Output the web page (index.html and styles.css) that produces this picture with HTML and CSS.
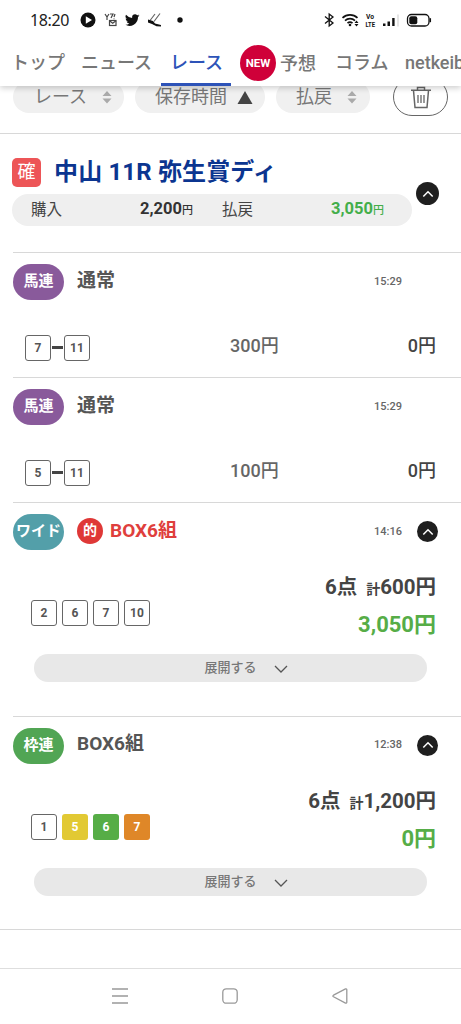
FILE: index.html
```html
<!DOCTYPE html>
<html lang="ja">
<head>
<meta charset="utf-8">
<meta name="viewport" content="width=device-width, initial-scale=1">
<title>レース</title>
<link rel="stylesheet" href="styles.css">
</head>
<body>
<div class="phone">
  <header class="top">
    <div class="status">
      <span class="clock">18:20</span>
      <svg class="notif" width="110" height="18" viewBox="0 0 110 18">
        <circle cx="8" cy="9" r="7.5" fill="#111"/><path d="M5.8 5.2v7.6L12 9z" fill="#fff"/>
        <g fill="none" stroke="#444" stroke-width="1.200"><path d="M25 3l2 3 2-3M27 6v3M30 3h3l-2 4M35 3l-1 3M34 7.500v.8"/><rect x="29.500" y="9.500" width="6.500" height="5"/><path d="M29.500 9.700l3.200 2.600 3.300-2.600"/></g>
        <path d="M59.5 4.600a6 6 0 0 1-1.700.5 3 3 0 0 0 1.300-1.600 6 6 0 0 1-1.900.7 3 3 0 0 0-5.100 2.700 8.500 8.500 0 0 1-6.100-3.100 3 3 0 0 0 .9 4 3 3 0 0 1-1.300-.4 3 3 0 0 0 2.400 2.900 3 3 0 0 1-1.400.1 3 3 0 0 0 2.800 2 6 6 0 0 1-4.400 1.200 8.500 8.500 0 0 0 13-7.500 6 6 0 0 0 1.500-1.500z" fill="#111"/>
        <path d="M75 3L70 9.500M80 2.500L74 10.500" stroke="#666" stroke-width="1.200"/><path d="M68 8.500l5 1.500 2 2.500 6 1.500v1.600l-4.500-.4-4.500-2.200-4-1.500z" fill="#111"/>
        <circle cx="100" cy="9" r="2.700" fill="#111"/>
      </svg>
      <svg class="signals" width="112" height="18" viewBox="0 0 112 18">
        <path d="M3 5.500l8 6.500-3.800 3V3L11 6l-8 6.500" fill="none" stroke="#111" stroke-width="1.300"/>
        <g fill="none" stroke="#111" stroke-width="1.700"><path d="M20.500 6.800a11 11 0 0 1 15 0M23 9.600a7.500 7.500 0 0 1 10 0M25.500 12.200a4 4 0 0 1 5 0"/></g>
        <circle cx="28" cy="14" r="1.300" fill="#111"/><path d="M32.500 12l2-2.500 2 2.500zM32.500 13l2 2.500 2-2.500z" fill="#111"/>
        <text x="44" y="8" class="volte" textLength="8" lengthAdjust="spacingAndGlyphs">Vo</text>
        <text x="43.500" y="15.500" class="volte" textLength="9.500" lengthAdjust="spacingAndGlyphs">LTE</text>
        <path d="M61 12.500h2.500V15H61zM65.500 10.500H68V15h-2.500zM70.200 7h2.400v8h-2.400z" fill="#111"/><path d="M75.500 3.500h1v12h-1z" fill="#ccc"/>
        <rect x="85.500" y="3.500" width="21.500" height="11.500" rx="4" fill="none" stroke="#111" stroke-width="1.300"/><rect x="87.300" y="5.200" width="8" height="8" rx="2" fill="#111"/><path d="M108.300 7.200v4" stroke="#111" stroke-width="1.500"/>
      </svg>
    </div>
    <nav class="tabs">
      <a class="tab">トップ</a>
      <a class="tab">ニュース</a>
      <a class="tab tab-active">レース</a>
      <a class="tab tab-new"><span class="new">NEW</span>予想</a>
      <a class="tab">コラム</a>
      <a class="tab">netkeib</a>
    </nav>
  </header>

  <div class="filters">
    <div class="filter filter-race">レース<svg width="10" height="14" viewBox="0 0 10 14"><path d="M5 1l4.500 5h-9zM5 13.500L.5 8.500h9z" fill="#aaa"/></svg></div>
    <div class="filter filter-time">保存時間<svg width="16" height="14" viewBox="0 0 16 14"><path d="M8 1l7.500 13H.5z" fill="#444"/></svg></div>
    <div class="filter filter-pay">払戻<svg width="10" height="14" viewBox="0 0 10 14"><path d="M5 1l4.500 5h-9zM5 13.500L.5 8.500h9z" fill="#aaa"/></svg></div>
    <button class="trash" aria-label="削除"><svg width="22" height="24" viewBox="0 0 22 24" fill="none" stroke="#666" stroke-width="1.500"><path d="M1 5.200h20M7.500 5V2.500h7V5M3.500 5.500l1.500 17h12l1.500-17"/><path d="M8 10v8M11 10v8M14 10v8" stroke-width="1.300"/></svg></button>
  </div>

  <section class="race">
    <div class="race-main">
      <div class="race-title"><span class="fixed">確</span><h1>中山 11R 弥生賞ディ</h1></div>
      <div class="summary">
        <span class="label">購入</span><span class="sum buy">2,200<small>円</small></span>
        <span class="label">払戻</span><span class="sum win">3,050<small>円</small></span>
      </div>
    </div>
    <button class="toggle toggle-lg" aria-label="閉じる"><svg width="12" height="8" viewBox="0 0 12 8"><path d="M1.300 6.500L6 1.700l4.700 4.800"/></svg></button>
  </section>

  <section class="bet">
    <div class="head"><span class="kind umaren">馬連</span><h2>通常</h2><time>15:29</time></div>
    <div class="line"><div class="pair"><b class="num">7</b><i></i><b class="num">11</b></div><span class="stake">300円</span><span class="result">0円</span></div>
  </section>
  <section class="bet">
    <div class="head"><span class="kind umaren">馬連</span><h2>通常</h2><time>15:29</time></div>
    <div class="line"><div class="pair"><b class="num">5</b><i></i><b class="num">11</b></div><span class="stake">100円</span><span class="result">0円</span></div>
  </section>

  <section class="bet bet-box">
    <div class="head"><span class="kind wide">ワイド</span><span class="hit">的</span><h2 class="red">BOX6組</h2><time>14:16</time>
      <button class="toggle" aria-label="閉じる"><svg width="12" height="8" viewBox="0 0 12 8"><path d="M1.300 6.500L6 1.700l4.700 4.800"/></svg></button></div>
    <div class="box-row">
      <div class="nums"><b class="num">2</b><b class="num">6</b><b class="num">7</b><b class="num">10</b></div>
      <div class="totals"><p>6点<small>計</small>600円</p><p class="payout">3,050円</p></div>
    </div>
    <div class="expand">展開する<svg width="14" height="8" viewBox="0 0 14 8"><path d="M1 1l6 6 6-6"/></svg></div>
  </section>

  <section class="bet bet-box">
    <div class="head"><span class="kind wakuren">枠連</span><h2>BOX6組</h2><time>12:38</time>
      <button class="toggle" aria-label="閉じる"><svg width="12" height="8" viewBox="0 0 12 8"><path d="M1.300 6.500L6 1.700l4.700 4.800"/></svg></button></div>
    <div class="box-row">
      <div class="nums"><b class="num">1</b><b class="num yellow">5</b><b class="num green">6</b><b class="num orange">7</b></div>
      <div class="totals"><p>6点<small>計</small>1,200円</p><p class="payout">0円</p></div>
    </div>
    <div class="expand">展開する<svg width="14" height="8" viewBox="0 0 14 8"><path d="M1 1l6 6 6-6"/></svg></div>
  </section>

  <div class="rest"></div>
  <footer class="sysnav">
    <svg width="16" height="16" viewBox="0 0 16 16"><path d="M0 1h16M0 8h16M0 15h16"/></svg>
    <svg width="16" height="16" viewBox="0 0 16 16"><rect x=".8" y=".8" width="14.400" height="14.400" rx="3.500"/></svg>
    <svg width="16" height="16" viewBox="0 0 16 16"><path d="M1.500 7.200L13.500.9q1.300-.4 1.300.9v12.400q0 1.300-1.300.9L1.500 8.800Q.2 8 1.500 7.200z"/></svg>
  </footer>
</div>
</body>
</html>
```
FILE: styles.css
```css
* { box-sizing: border-box; }
body, h1, h2, p { margin: 0; }
body { background: #fff; font-family: Roboto, "Noto Sans CJK JP", sans-serif; color: #555; }
button { padding: 0; background: none; border: 0; }
svg { display: block; flex: none; }

.phone { width: 461px; height: 1024px; overflow: hidden; display: flex; flex-direction: column; }
.phone > * { flex: none; }

.top { height: 86px; background: #fff; position: relative; z-index: 1; box-shadow: 0 2px 6px rgba(0, 0, 0, .2); }
.status { height: 41px; display: flex; align-items: center; padding: 0 27px 1px 30px; }
.clock { width: 50px; font: 16px/18px "Noto Sans", sans-serif; letter-spacing: -.4px; color: #222; }
.signals { margin-left: auto; }
.volte { font: bold 8px Roboto, sans-serif; fill: #111; }

.tabs { height: 45px; padding-left: 2px; display: flex; white-space: nowrap; overflow: hidden; }
.tab { flex: none; height: 45px; line-height: 44px; padding: 0 9px; font-size: 18px; font-weight: 500; color: #777; }
.tab:nth-child(1) { width: 70px; }
.tab:nth-child(2) { width: 89px; }
.tab-active { width: 70px; color: #2d53b8; border-bottom: 3px solid #2d53b8; }
.tab-new { width: 95px; display: flex; align-items: center; line-height: 45px; padding: 0 0 1px 9px; gap: 4px; }
.tab:nth-child(5) { width: 70px; }
.new { width: 36px; height: 36px; border-radius: 50%; background: #cf0039; color: #fff; font-size: 11.500px; font-weight: 700; line-height: 36px; text-align: center; }

.filters { height: 48px; padding-left: 13px; display: flex; border-bottom: 1px solid #d8d8d8; }
.filter { height: 32px; margin-top: -5px; border-radius: 16px; background: #f0f0f0; display: flex; align-items: center; justify-content: space-between; font-size: 18px; line-height: 32px; color: #777; }
.filter-race { width: 111px; padding: 0 12px 0 21px; }
.filter-time { width: 130px; padding: 0 12px 0 20px; margin-left: 11px; }
.filter-pay { width: 94px; padding: 0 13px 0 20px; margin-left: 11px; }
.trash { width: 55px; height: 38px; margin: -8px 0 0 23px; border: 1px solid #666; border-radius: 19px; display: grid; place-items: center; }

.race { height: 118px; padding: 22px 22px 0 12px; display: flex; justify-content: space-between; }
.race-title { height: 32px; display: flex; align-items: center; gap: 13px; }
.fixed { width: 29px; height: 29px; border-radius: 5px; background: #ed5557; color: #fff; font-size: 18px; line-height: 27px; text-align: center; }
h1 { font-size: 24px; line-height: 30px; font-weight: 700; letter-spacing: .15px; color: #0b3590; white-space: nowrap; }
.summary { width: 400px; height: 32px; margin-top: 6px; padding: 0 28px 0 19px; border-radius: 16px; background: #efefef; display: grid; grid-template-columns: 60px 102px 60px 131px; align-items: center; }
.label { font-size: 15.500px; color: #444; line-height: 30px; }
.label:nth-of-type(3) { padding-left: 29px; white-space: nowrap; }
.sum { font-size: 16.500px; font-weight: 700; text-align: right; line-height: 30px; }
.sum small { font-size: 11px; font-weight: 500; }
.buy { color: #333; }
.win { color: #43ae4a; }

.toggle { flex: none; width: 21px; height: 21px; border-radius: 50%; background: #1f1f1f; display: grid; place-items: center; margin-left: 15px; }
.toggle-lg { width: 23px; height: 23px; margin: 26px 0 0; }
.toggle path { fill: none; stroke: #fff; stroke-width: 1.500; }

.bet { height: 125px; margin-left: 13px; padding: 11px 25px 0 0; border-top: 1px solid #d8d8d8; }
.head { height: 36px; display: flex; align-items: center; }
.kind { width: 51px; height: 36px; border-radius: 18px; color: #fff; font-size: 15px; font-weight: 700; line-height: 34px; text-align: center; white-space: nowrap; }
.umaren { background: #895a9b; }
.wide { background: #539fa9; }
.wakuren { background: #51a554; }
h2 { margin: -3px 0 0 13px; font-size: 19px; line-height: 24px; font-weight: 700; }
time { margin: -2px 34px 0 auto; font-size: 11px; font-weight: 500; color: #666; }
.line { margin-top: 33px; height: 28px; padding-left: 12px; display: grid; grid-template-columns: 205px 1fr auto; align-items: center; }
.pair { display: flex; align-items: center; padding-top: 1px; }
.pair i { width: 11px; height: 3px; margin: 0 1px; background: #444; }
.num { width: 26px; height: 26px; border: 1px solid #666; border-radius: 3px; font-size: 12px; font-weight: 700; line-height: 24px; text-align: center; color: #555; }
.stake, .result { font-size: 18px; line-height: 26px; font-weight: 500; margin-top: -2px; }
.stake { color: #666; }
.result { color: #444; }

.bet-box { height: 213.500px; }
.bet-box time { margin-right: 0; }
.bet-box .toggle { margin: -1px -2px 0 15px; }
.hit { width: 26px; height: 26px; margin: -2px 0 0 13px; border-radius: 50%; background: #df3837; color: #fff; font-size: 14px; font-weight: 700; line-height: 24px; text-align: center; }
.hit + h2 { margin-left: 7px; }
.red { color: #df3f3d; }
.box-row { height: 72px; margin-top: 21px; padding-left: 18px; display: flex; justify-content: space-between; }
.nums { display: flex; gap: 5px; padding-top: 29px; }
.totals { text-align: right; font-size: 20.500px; line-height: 36px; font-weight: 700; color: #444; margin-top: -2px; }
.totals small { font-size: 14px; margin-left: 9px; }
.payout { font-size: 22px; color: #56ad47; }
.yellow, .green, .orange { border: 0; color: #fff; line-height: 26px; }
.yellow { background: #e2c933; }
.green { background: #56ad46; }
.orange { background: #df8728; }
.expand { width: 393px; height: 28px; margin: 11px 0 0 21px; border-radius: 14px; background: #e8e8e8; display: flex; align-items: center; justify-content: center; gap: 17px; padding-left: 31px; font-size: 13px; font-weight: 500; line-height: 26px; color: #777; }
.expand svg { margin-top: 2px; }
.expand path { fill: none; stroke: #555; stroke-width: 1.300; }

.rest { height: 39px; border-top: 1px solid #d8d8d8; }
.sysnav { height: 56px; border-top: 1px solid #dedede; display: flex; justify-content: center; align-items: center; gap: 94px; padding: 0 1px 1px 0; }
.sysnav svg { fill: none; stroke: #999; stroke-width: 1.300; }
```
